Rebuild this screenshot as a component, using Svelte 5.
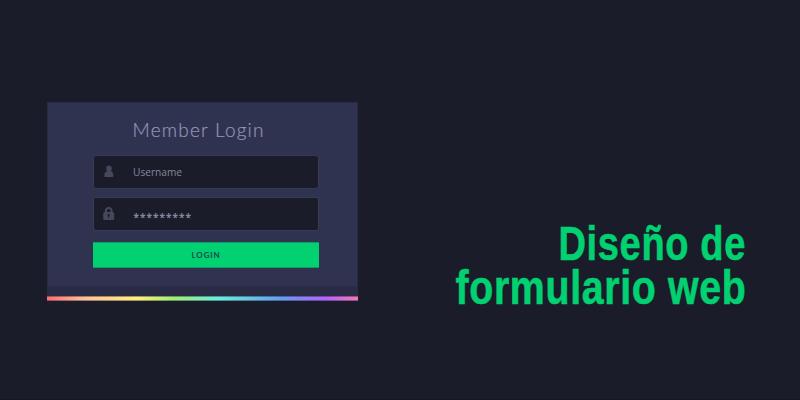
<script>
  const heading = [
    { text: 'Diseño de', x: 558.5, y: 260, width: 187.5 },
    { text: 'formulario web', x: 455.5, y: 304, width: 291 },
  ];
</script>

<main>
  <form class="card" onsubmit={(e) => e.preventDefault()}>
    <div class="body">
      <svg class="title" width="140" height="26" viewBox="0 0 140 26">
        <text x="-.5" y="19" textLength="131" lengthAdjust="spacing">Member Login</text>
      </svg>
      <div class="field">
        <svg class="icon" width="12" height="14" viewBox="0 0 12 14">
          <path d="M6 .4C7.7 .4 8.8 1.5 8.8 3.2C8.8 4.5 8.5 5.3 7.6 6.1C9.4 6.7 10.2 7.9 10.2 10V11.5Q10.2 12 9.7 12H1.9Q1.4 12 1.4 11.5V10C1.4 7.9 2.5 6.7 4.3 6.1C3.5 5.3 3.2 4.5 3.2 3.2C3.2 1.5 4.3 .4 6 .4Z" />
        </svg>
        <svg class="value" width="60" height="20">
          <text x="0" y="14" textLength="49" lengthAdjust="spacingAndGlyphs">Username</text>
        </svg>
      </div>
      <div class="field">
        <svg class="icon" width="12" height="14" viewBox="0 0 12 14">
          <path fill-rule="evenodd" d="M1.8 5V4C1.8 1.2 3.4 0 5.7 0S9.6 1.2 9.6 4V5Q11.2 5 11.2 6.5V11.5Q11.2 13 9.7 13H1.7Q.2 13 .2 11.5V6.5Q.2 5 1.8 5ZM4 5H7.5V4C7.5 2.5 6.8 2 5.7 2S4 2.5 4 4ZM5.2 9V11H6.2V9A1.1 1.1 0 1 0 5.2 9Z" />
        </svg>
        <svg class="value stars" width="70" height="24">
          <text x=".5" y="18.5" textLength="57.5" lengthAdjust="spacing">*********</text>
        </svg>
      </div>
      <button>LOGIN</button>
    </div>
    <div class="foot"></div>
    <div class="rainbow"></div>
  </form>
  <svg class="heading" width="800" height="400" viewBox="0 0 800 400">
    {#each heading as line}
      <text x={line.x} y={line.y} textLength={line.width} lengthAdjust="spacingAndGlyphs">{line.text}</text>
    {/each}
  </svg>
</main>

<style>
  :global(body) { margin: 0; background: #1b1c2a; }
  main {
    position: relative;
    width: 800px;
    height: 400px;
    box-sizing: border-box;
    padding: 102px 0 0 47px;
    background: #1b1c2a;
    border-bottom: 1px solid #1b1223;
    overflow: hidden;
  }
  svg { display: block; flex: none; overflow: visible; }
  .heading {
    position: absolute;
    inset: 0;
    pointer-events: none;
    font: bold 49px "Liberation Sans", Arial, sans-serif;
    letter-spacing: .8px;
    fill: #01d171;
    stroke: #01d171;
    stroke-width: .6px;
  }
  .card { width: 311px; }
  .body {
    height: 184px;
    box-sizing: border-box;
    padding: 15px 39px 0 46px;
    background: #303350;
    border: solid #292b43;
    border-width: 1px 1px 0;
    display: flex;
    flex-direction: column;
  }
  .title {
    margin: 0 0 11px 39px;
    font: 300 19px Lato, sans-serif;
    fill: #9295b8;
    stroke: #9295b8;
    stroke-width: .2px;
  }
  .field {
    width: 226px;
    height: 34px;
    flex: none;
    box-sizing: border-box;
    margin: 0 0 8px -1px;
    padding-left: 9px;
    border: 1px solid #363a54;
    border-radius: 3px;
    background: #1b1c2a;
    display: flex;
    align-items: center;
  }
  .icon { fill: #45475a; }
  .value {
    margin-left: 18px;
    font: 500 10.5px "Open Sans", sans-serif;
    fill: #85879a;
  }
  .stars { font: bold 10px "Open Sans", sans-serif; }
  button {
    width: 226px;
    height: 26px;
    margin: 3px 0 0 -1px;
    padding: 0;
    border: 1px solid #109b64;
    border-width: 1px 0;
    background: #01d171;
    color: #1e474d;
    font: bold 8px Lato, sans-serif;
    letter-spacing: .8px;
    flex: none;
  }
  .foot { height: 10px; background: #282b43; }
  .rainbow {
    height: 5px;
    box-sizing: border-box;
    border: solid rgba(27, 28, 42, .4);
    border-width: 1px 0;
    background: linear-gradient(90deg, #ff6d70, #ffbf9b 12%, #fff07c 29%, #9fee77 41%, #69eddb 55%, #669fee 75%, #ae64ff 89%, #f477b5) border-box;
  }
</style>
